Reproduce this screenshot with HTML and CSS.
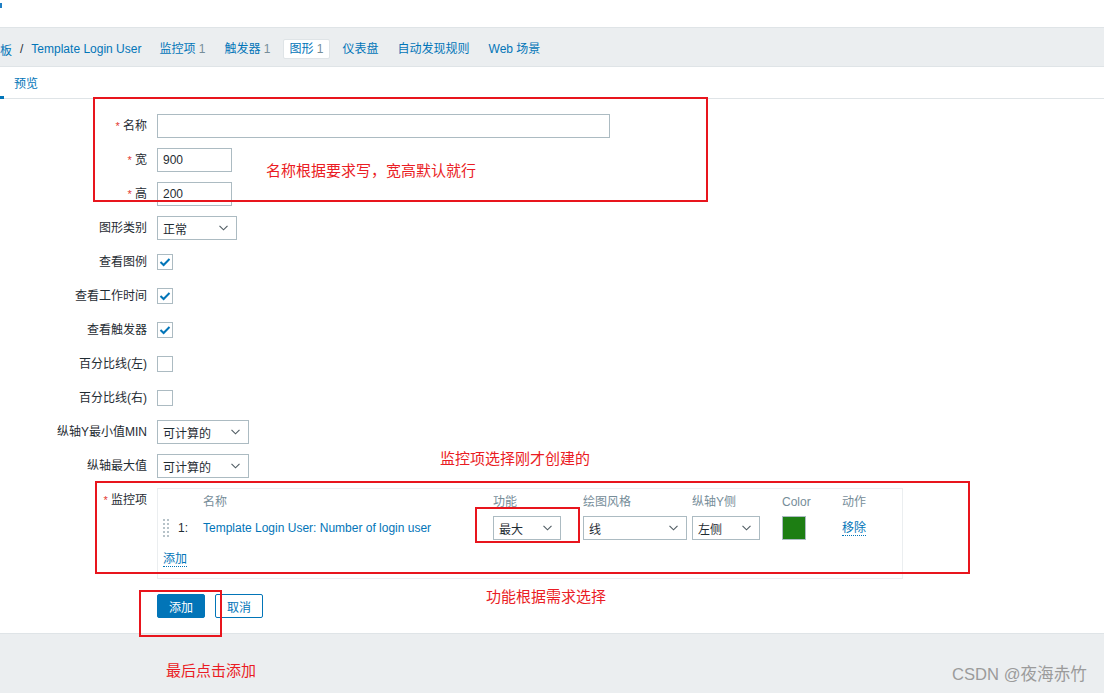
FILE: index.html
```html
<!DOCTYPE html>
<html lang="zh-CN">
<head>
<meta charset="utf-8">
<title>图形</title>
<link rel="stylesheet" href="styles.css">
</head>
<body>
<div class="page">
  <div class="topband"><span class="logo-cut"></span></div>

  <nav class="nav">
    <div class="crumbs">
      <a class="crumb crumb-cut">模板</a>
      <span class="sep">/</span>
      <a class="crumb">Template Login User</a>
    </div>
    <a class="nav-item">监控项 <span class="cnt">1</span></a>
    <a class="nav-item">触发器 <span class="cnt">1</span></a>
    <a class="nav-item active">图形 <span class="cnt">1</span></a>
    <a class="nav-item">仪表盘</a>
    <a class="nav-item">自动发现规则</a>
    <a class="nav-item">Web 场景</a>
  </nav>

  <div class="subtabs"><span class="subtab">预览</span></div>

  <main class="form">
    <label class="lbl"><span class="req">*</span> 名称</label>
    <div class="field"><input class="inp w-wide" type="text" value=""></div>

    <label class="lbl"><span class="req">*</span> 宽</label>
    <div class="field"><input class="inp w-num" type="text" value="900"></div>

    <label class="lbl"><span class="req">*</span> 高</label>
    <div class="field"><input class="inp w-num" type="text" value="200"></div>

    <label class="lbl">图形类别</label>
    <div class="field"><div class="sel w-type"><span>正常</span><svg class="chev" width="9" height="6" viewBox="0 0 9 6"><path d="M0.5 0.8 L4.5 4.8 L8.5 0.8" fill="none" stroke="#4f5b62" stroke-width="1.1"/></svg></div></div>

    <label class="lbl">查看图例</label>
    <div class="field"><span class="cb"><svg width="12" height="10" viewBox="0 0 12 10"><path d="M1.5 5 L4.6 8 L10.5 2" fill="none" stroke="#0275b8" stroke-width="2"/></svg></span></div>

    <label class="lbl">查看工作时间</label>
    <div class="field"><span class="cb"><svg width="12" height="10" viewBox="0 0 12 10"><path d="M1.5 5 L4.6 8 L10.5 2" fill="none" stroke="#0275b8" stroke-width="2"/></svg></span></div>

    <label class="lbl">查看触发器</label>
    <div class="field"><span class="cb"><svg width="12" height="10" viewBox="0 0 12 10"><path d="M1.5 5 L4.6 8 L10.5 2" fill="none" stroke="#0275b8" stroke-width="2"/></svg></span></div>

    <label class="lbl">百分比线(左)</label>
    <div class="field"><span class="cb"></span></div>

    <label class="lbl">百分比线(右)</label>
    <div class="field"><span class="cb"></span></div>

    <label class="lbl">纵轴Y最小值MIN</label>
    <div class="field"><div class="sel w-calc"><span>可计算的</span><svg class="chev" width="9" height="6" viewBox="0 0 9 6"><path d="M0.5 0.8 L4.5 4.8 L8.5 0.8" fill="none" stroke="#4f5b62" stroke-width="1.1"/></svg></div></div>

    <label class="lbl">纵轴最大值</label>
    <div class="field"><div class="sel w-calc"><span>可计算的</span><svg class="chev" width="9" height="6" viewBox="0 0 9 6"><path d="M0.5 0.8 L4.5 4.8 L8.5 0.8" fill="none" stroke="#4f5b62" stroke-width="1.1"/></svg></div></div>

    <label class="lbl lbl-top"><span class="req">*</span> 监控项</label>
    <div class="field">
      <div class="items">
        <span class="th"></span>
        <span class="th"></span>
        <span class="th">名称</span>
        <span class="th">功能</span>
        <span class="th">绘图风格</span>
        <span class="th">纵轴Y侧</span>
        <span class="th">Color</span>
        <span class="th">动作</span>

        <span class="td"><svg class="drag" width="7" height="18" viewBox="0 0 7 18"><g fill="#b7c3c9"><rect x="0" y="0" width="2" height="2"/><rect x="4" y="0" width="2" height="2"/><rect x="0" y="4" width="2" height="2"/><rect x="4" y="4" width="2" height="2"/><rect x="0" y="8" width="2" height="2"/><rect x="4" y="8" width="2" height="2"/><rect x="0" y="12" width="2" height="2"/><rect x="4" y="12" width="2" height="2"/><rect x="0" y="16" width="2" height="2"/><rect x="4" y="16" width="2" height="2"/></g></svg></span>
        <span class="td">1:</span>
        <span class="td"><a class="link">Template Login User: Number of login user</a></span>
        <span class="td"><div class="sel w-func"><span>最大</span><svg class="chev" width="9" height="6" viewBox="0 0 9 6"><path d="M0.5 0.8 L4.5 4.8 L8.5 0.8" fill="none" stroke="#4f5b62" stroke-width="1.1"/></svg></div></span>
        <span class="td"><div class="sel w-style"><span>线</span><svg class="chev" width="9" height="6" viewBox="0 0 9 6"><path d="M0.5 0.8 L4.5 4.8 L8.5 0.8" fill="none" stroke="#4f5b62" stroke-width="1.1"/></svg></div></span>
        <span class="td"><div class="sel w-func"><span>左侧</span><svg class="chev" width="9" height="6" viewBox="0 0 9 6"><path d="M0.5 0.8 L4.5 4.8 L8.5 0.8" fill="none" stroke="#4f5b62" stroke-width="1.1"/></svg></div></span>
        <span class="td"><span class="swatch"></span></span>
        <span class="td"><a class="link dotted">移除</a></span>

        <div class="add-row"><a class="link dotted">添加</a></div>
      </div>
    </div>

    <span class="lbl-empty"></span>
    <div class="field buttons">
      <button class="btn primary">添加</button>
      <button class="btn alt">取消</button>
    </div>
  </main>

  <footer class="footer"></footer>

  <div class="ann-box box1"></div>
  <div class="ann-text t1">名称根据要求写，宽高默认就行</div>
  <div class="ann-text t2">监控项选择刚才创建的</div>
  <div class="ann-box box2"></div>
  <div class="ann-box box3"></div>
  <div class="ann-text t3">功能根据需求选择</div>
  <div class="ann-box box4"></div>
  <div class="ann-text t4">最后点击添加</div>
  <div class="watermark">CSDN @夜海赤竹</div>
</div>
</body>
</html>
```

FILE: styles.css
```css
* { box-sizing: border-box; }

html, body {
  margin: 0;
  padding: 0;
  background: #ffffff;
}

body {
  font-family: "Liberation Sans", Arial, "Noto Sans CJK SC", sans-serif;
  font-size: 12px;
  color: #1f2c33;
}

.page {
  position: relative;
  width: 1104px;
  height: 693px;
  overflow: hidden;
  display: flex;
  flex-direction: column;
}

a { color: #0275b8; text-decoration: none; }

/* top band */
.topband {
  height: 27px;
  position: relative;
  flex: none;
}
.logo-cut {
  position: absolute;
  left: 0;
  top: 3px;
  width: 2px;
  height: 5px;
  background: #1f7fc4;
}

/* nav */
.nav {
  flex: none;
  height: 40px;
  background: #ebeef0;
  border-top: 1px solid #dfe4e7;
  border-bottom: 1px solid #dfe4e7;
  display: flex;
  align-items: flex-start;
  gap: 7px;
  padding-top: 11px;
  white-space: nowrap;
}
.crumbs {
  display: flex;
  align-items: center;
  height: 20px;
  padding-right: 5px;
}
.crumb-cut { margin-left: -12px; }
.sep { margin: 0 8px; color: #1f2c33; }
.nav-item {
  height: 20px;
  line-height: 18px;
  padding: 0 5px;
  border: 1px solid transparent;
  border-radius: 2px;
}
.nav-item.active {
  background: #ffffff;
  border-color: #dfe4e7;
}
.cnt { color: #768d99; }

/* subtabs */
.subtabs {
  flex: none;
  position: relative;
  height: 32px;
  border-bottom: 1px solid #dfe4e7;
  display: flex;
  align-items: center;
  padding-left: 14px;
  padding-bottom: 1px;
}
.subtabs::before {
  content: "";
  position: absolute;
  left: 0;
  bottom: -1px;
  width: 4px;
  height: 3px;
  background: #0275b8;
}
.subtab { color: #0275b8; }

/* form */
.form {
  flex: none;
  display: grid;
  grid-template-columns: 147px auto;
  column-gap: 10px;
  row-gap: 10px;
  padding-top: 15px;
  justify-content: start;
}
.lbl {
  text-align: right;
  line-height: 24px;
  height: 24px;
  white-space: nowrap;
}
.req { color: #e33734; font-size: 11px; }
.field {
  display: flex;
  align-items: center;
  min-height: 24px;
}

.inp {
  height: 24px;
  border: 1px solid #acbbc2;
  background: #fff;
  font: inherit;
  color: #1f2c33;
  padding: 0 5px;
  margin: 0;
  outline: none;
}
.w-wide { width: 453px; }
.w-num { width: 75px; }

.sel {
  height: 24px;
  border: 1px solid #acbbc2;
  background: #fff;
  display: flex;
  align-items: center;
  justify-content: space-between;
  padding: 0 8px 0 5px;
  color: #1f2c33;
}
.w-type { width: 80px; }
.w-calc { width: 92px; }
.w-func { width: 68px; }
.w-style { width: 104px; }
.chev { flex: none; }

.cb {
  width: 16px;
  height: 16px;
  border: 1px solid #acbbc2;
  background: #fff;
  display: flex;
  align-items: center;
  justify-content: center;
}

/* items table */
.items {
  width: 746px;
  border: 1px solid #ebeef0;
  padding: 5px 6px 11px 5px;
  display: grid;
  grid-template-columns: 15px 25px 290px 90px 109px 90px 60px auto;
  row-gap: 6px;
  align-items: center;
}
.th {
  color: #768d99;
  line-height: 16px;
  height: 16px;
}
.td {
  display: flex;
  align-items: center;
  height: 24px;
}
.drag { display: block; }
.link { color: #0275b8; }
.dotted { border-bottom: 1px dotted #0275b8; line-height: 14px; }
.swatch {
  width: 24px;
  height: 24px;
  background: #1d7e13;
  border: 1px solid #acbbc2;
}
.add-row {
  grid-column: 1 / -1;
  margin-top: 5px;
  height: 16px;
  display: flex;
  align-items: center;
}

/* buttons */
.buttons {
  margin-top: 5px;
  gap: 10px;
}
.btn {
  height: 24px;
  width: 48px;
  font: inherit;
  border-radius: 2px;
  padding: 0;
  margin: 0;
  cursor: pointer;
}
.btn.primary {
  background: #0275b8;
  color: #fff;
  border: 1px solid #0275b8;
}
.btn.alt {
  background: #fff;
  color: #0275b8;
  border: 1px solid #0275b8;
}

/* footer */
.footer {
  flex: 1;
  margin-top: 15px;
  background: #ebeef0;
  border-top: 1px solid #dfe4e7;
}

/* annotations (overlay) */
.ann-box {
  position: absolute;
  border: 2px solid #e8151d;
}
.box1 { left: 93px; top: 97px; width: 615px; height: 105px; }
.box2 { left: 95px; top: 481px; width: 875px; height: 93px; }
.box3 { left: 475px; top: 507px; width: 105px; height: 36px; }
.box4 { left: 139px; top: 590px; width: 83px; height: 47px; }

.ann-text {
  position: absolute;
  font-family: "Noto Sans CJK SC", sans-serif;
  font-size: 15px;
  line-height: 18px;
  color: #ea1c24;
  white-space: nowrap;
}
.t1 { left: 266px; top: 161px; }
.t2 { left: 440px; top: 449px; }
.t3 { left: 486px; top: 587px; }
.t4 { left: 166px; top: 661px; }

.watermark {
  position: absolute;
  left: 952px;
  top: 665px;
  font-family: "Liberation Sans", "Noto Sans CJK SC", sans-serif;
  font-size: 16.6px;
  line-height: 20px;
  color: #9b9b9b;
  white-space: nowrap;
}
```
